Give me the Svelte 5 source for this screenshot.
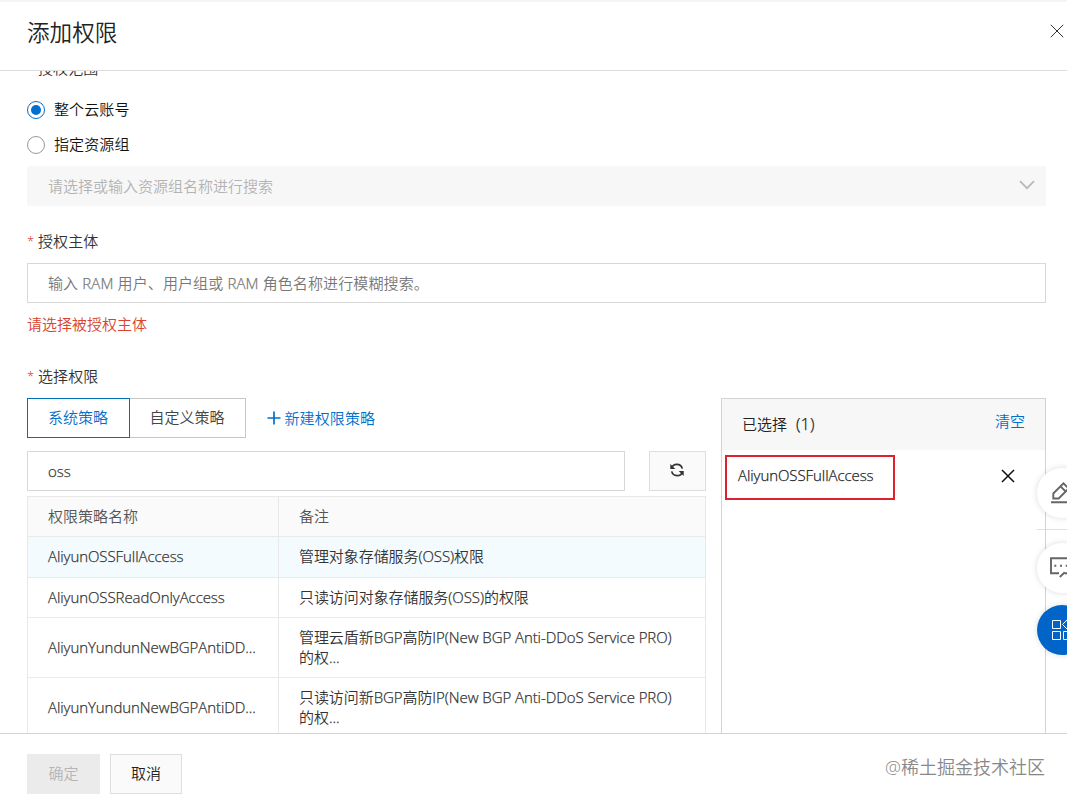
<script>
  const rows = [
    { name: 'AliyunOSSFullAccess', lines: ['管理对象存储服务(OSS)权限'], active: true, h: 41 },
    { name: 'AliyunOSSReadOnlyAccess', lines: ['只读访问对象存储服务(OSS)的权限'], h: 40 },
    { name: 'AliyunYundunNewBGPAntiDD...', lines: ['管理云盾新BGP高防IP(New BGP Anti-DDoS Service PRO)', '的权...'], h: 60 },
    { name: 'AliyunYundunNewBGPAntiDD...', lines: ['只读访问新BGP高防IP(New BGP Anti-DDoS Service PRO)', '的权...'], h: 60 }
  ];
  // Splits a string into Latin and Chinese runs so each gets its own stroke weight.
  const runs = (text) => text.match(/[\x20-\x7e]+|[^\x20-\x7e]+/g);
  const isLatin = (run) => /^[\x20-\x7e]/.test(run);
</script>

{#snippet mixed(text)}<span class="line">{#each runs(text) as run}<span class:latin={isLatin(run)}>{run}</span>{/each}</span>{/snippet}

<div class="drawer">
  <header>
    <h1>添加权限</h1>
    <svg class="close" width="14" height="14" viewBox="0 0 14 14"><path d="M.8.8l12.4 12.4M13.2.8L.8 13.2" /></svg>
  </header>

  <main>
    <div class="label scope"><i>*</i>授权范围</div>
    <div class="radio first"><span class="dot on"></span><span class="text">整个云账号</span></div>
    <div class="radio"><span class="dot"></span><span class="text">指定资源组</span></div>
    <div class="select">
      <span>请选择或输入资源组名称进行搜索</span>
      <svg width="16" height="10" viewBox="0 0 16 10"><path d="M1 1.2l7 7 7-7" /></svg>
    </div>

    <div class="label subject"><i>*</i>授权主体</div>
    <div class="input principal">{@render mixed('输入 RAM 用户、用户组或 RAM 角色名称进行模糊搜索。')}</div>
    <div class="error">请选择被授权主体</div>

    <div class="label choose"><i>*</i>选择权限</div>
    <div class="columns">
      <section class="left">
        <div class="tabs">
          <div class="tab current">系统策略</div>
          <div class="tab other">自定义策略</div>
          <div class="create">
            <svg width="14" height="14" viewBox="0 0 14 14"><path d="M7 .5v13M.5 7h13" /></svg>新建权限策略
          </div>
        </div>
        <div class="search">
          <div class="input keyword"><span class="latin">oss</span></div>
          <div class="refresh">
            <svg width="14" height="14" viewBox="0 0 14 14">
              <path d="M1.5 5.4A5.6 5.6 0 0 1 12.3 5.6M12.5 8.7A5.6 5.6 0 0 1 1.7 8.4" />
              <path class="fill" d="M.3 1v5.1h5zM13.7 13V7.9h-5z" />
            </svg>
          </div>
        </div>
        <div class="table">
          <div class="row head"><div class="name">权限策略名称</div><div class="note">备注</div></div>
          {#each rows as row}
            <div class="row" class:active={row.active} style="height:{row.h}px">
              <div class="name"><span class="latin">{row.name}</span></div>
              <div class="note">{#each row.lines as line}{@render mixed(line)}{/each}</div>
            </div>
          {/each}
        </div>
      </section>
      <section class="picked">
        <div class="picked-head"><span class="count">已选择<b class="latin">(1)</b></span><span class="clear">清空</span></div>
        <div class="picked-item">
          <div class="mark"><span class="latin">AliyunOSSFullAccess</span></div>
          <svg width="14" height="14" viewBox="0 0 14 14"><path d="M1 1l12 12M13 1L1 13" /></svg>
        </div>
      </section>
    </div>
  </main>

  <footer>
    <div class="btn disabled">确定</div>
    <div class="btn">取消</div>
    <span class="credit">@稀土掘金技术社区</span>
  </footer>

  <div class="float">
    <div class="bubble">
      <svg width="24" height="24" viewBox="0 0 24 24"><path d="M1 21.2h22M3.3 17.5v-5L13.5 2.3l5.2 5.2-10 10zM10.5 5.3l5.2 5.2" /></svg>
    </div>
    <div class="rule"></div>
    <div class="bubble talk">
      <svg width="26" height="24" viewBox="0 0 26 24"><path d="M10 17.2H2V2.3h22v14.9h-7M10.8 21l4.4-4.2 2 .8" /><path class="fill" d="M5.3 8.8h2v2h-2zM11 8.8h2v2h-2zM16.7 8.8h2v2h-2z" /></svg>
    </div>
    <div class="bubble apps">
      <svg width="22" height="22" viewBox="0 0 22 22"><path d="M1.5 1.5h8v8h-8zM1.5 12.5h8v8h-8zM12.5 12.5h8v8h-8zM16.5.5l5 5-5 5-5-5z" /></svg>
    </div>
  </div>
</div>

<style>
  :global(body) { margin: 0; background: #fff; }
  .drawer, .drawer * { box-sizing: border-box; }
  .drawer {
    position: relative; width: 1067px; height: 800px; overflow: hidden;
    display: flex; flex-direction: column; background: #fff; color: #333;
    font: 350 15px/20px "Open Sans", "Noto Sans CJK SC", sans-serif;
    white-space: nowrap;
  }
  .line { white-space: pre; }
  .latin { -webkit-text-stroke: .25px currentColor; }
  svg { display: block; fill: none; stroke: #333; flex: none; }
  svg .fill { fill: #333; stroke: none; }
  header {
    height: 71px; flex: none; border-top: 2px solid #f5f5f5; border-bottom: 1px solid #dedede;
    display: flex; justify-content: space-between; padding: 14px 3px 0 27px;
  }
  h1 { margin: 0; font-size: 22.6px; line-height: 34px; font-weight: 350; color: #222; }
  .close { margin-top: 8px; }
  main { height: 662px; flex: none; overflow: hidden; padding: 0 21px 0 27px; display: flex; flex-direction: column; }
  .label { height: 20px; flex: none; display: flex; letter-spacing: .1px; }
  .label i { width: 11px; font-style: normal; color: #d93026; font-size: 13px; }
  .scope { margin-top: -13px; }
  .radio { height: 20px; flex: none; display: flex; align-items: center; gap: 9px; color: #111; margin-top: 15px; }
  .radio.first { margin-top: 22px; }
  .text { padding-bottom: 2px; letter-spacing: .1px; }
  .dot { width: 18px; height: 18px; border: 1px solid #999; border-radius: 50%; display: flex; align-items: center; justify-content: center; }
  .dot.on { border-color: #0070cc; }
  .dot.on::after { content: ""; width: 10px; height: 10px; border-radius: 50%; background: #0070cc; }
  .select {
    height: 40px; flex: none; margin-top: 11px; background: #f7f7f7; border-radius: 2px; color: #b3b3b3;
    display: flex; align-items: center; justify-content: space-between; padding: 0 11px 0 21px;
  }
  .select svg { stroke: #b8b8b8; stroke-width: 1.7; margin-top: -2px; }
  .subject { margin-top: 25px; }
  .input { height: 40px; flex: none; border: 1px solid #d8d8d8; display: flex; align-items: center; padding-left: 20px; }
  .principal { margin-top: 12px; color: #777; letter-spacing: .12px; }
  .error { margin-top: 11px; height: 20px; flex: none; color: #d9442f; }
  .choose { margin-top: 32px; }
  .columns { display: flex; justify-content: space-between; margin-top: 12px; height: 335px; flex: none; }
  .left { width: 679px; }
  .tabs { display: flex; height: 40px; }
  .tab { display: flex; align-items: center; justify-content: center; border: 1px solid #c8c8c8; color: #444; padding: 0 1px 2px 0; }
  .current { width: 103px; border-color: #0070b8; color: #0070cc; }
  .other { width: 116px; border-left: 0; }
  .create { display: flex; align-items: center; gap: 4px; margin-left: 20.5px; color: #0070cc; letter-spacing: .1px; }
  .create svg { stroke: #0070cc; stroke-width: 1.7; }
  .search { display: flex; justify-content: space-between; margin-top: 13px; }
  .keyword { width: 598px; }
  .refresh { width: 57px; height: 40px; border: 1px solid #dedede; background: #fafafa; display: flex; align-items: center; justify-content: center; padding: 0 1px 2px 0; }
  .refresh svg { stroke-width: 1.7; }
  .table { margin-top: 5px; border: 1px solid #e8e8e8; border-bottom: 0; }
  .row { display: flex; border-bottom: 1px solid #e8eaec; letter-spacing: -.07px; }
  .head { height: 40px; background: #fafafa; color: #555; letter-spacing: 0; }
  .active { background: #f3fbff; }
  .name { width: 251px; border-right: 1px solid #e8e8e8; padding: 0 0 2px 20px; display: flex; align-items: center; }
  .note { padding: 0 0 2px 20px; display: flex; flex-direction: column; justify-content: center; align-items: flex-start; }
  .picked { width: 325px; border: 1px solid #d3d3d3; border-bottom: 0; }
  .picked-head { height: 51px; background: #f7f7f7; display: flex; justify-content: space-between; padding: 15px 20px 0 20px; color: #222; }
  .picked-head b { font-weight: 350; margin-left: 9px; font-size: 16.5px; }
  .clear { color: #0070cc; margin-top: -3px; }
  .picked-item { display: flex; justify-content: space-between; align-items: center; padding: 5px 30px 0 3px; }
  .picked-item svg { stroke: #111; stroke-width: 1.5; margin-top: -4px; }
  .mark { width: 170px; height: 45px; border: 2px solid #e0202c; padding: 8px 0 0 11px; color: #222; letter-spacing: -.07px; }
  footer { height: 67px; flex: none; border-top: 1px solid #d3d3d3; display: flex; padding: 20px 22px 0 27px; gap: 10px; }
  .btn { width: 72px; height: 40px; border: 1px solid #dedede; background: #fafafa; display: flex; align-items: center; justify-content: center; color: #222; padding-bottom: 2px; }
  .disabled { width: 73px; background: #ebebeb; border-color: #ebebeb; color: #b5b5b5; }
  .credit { margin-left: auto; font-size: 18px; line-height: 26px; color: #888; }
  .float { position: absolute; left: 1037px; top: 468px; width: 50px; display: flex; flex-direction: column; }
  .bubble { width: 50px; height: 50px; border-radius: 50%; background: #fff; box-shadow: 0 0 6px rgba(0,0,0,.14); display: flex; align-items: center; justify-content: center; }
  .bubble svg { stroke: #666; stroke-width: 1.9; }
  .bubble svg .fill { fill: #666; stroke: none; }
  .rule { height: 1px; background: #e0e0e0; margin: 11px 0 13px; }
  .bubble.apps { background: #0064c8; margin-top: 12px; }
  .bubble.apps svg { stroke: #fff; stroke-width: 1; }
</style>
